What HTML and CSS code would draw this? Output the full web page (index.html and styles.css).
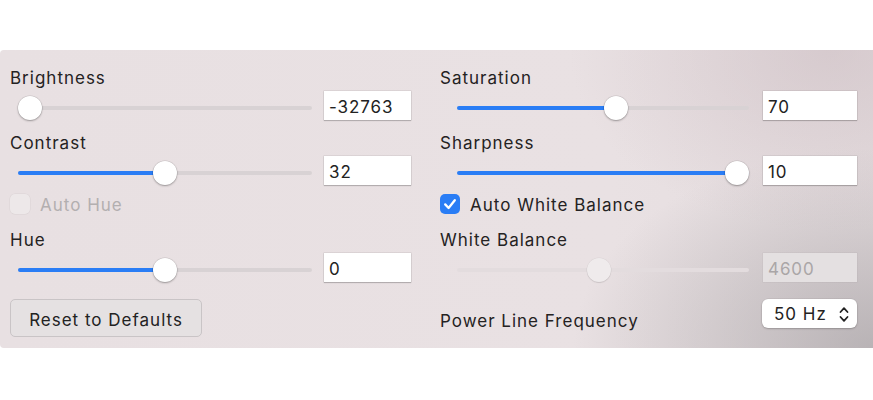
FILE: index.html
```html
<!DOCTYPE html>
<html>

<head>
  <meta name="viewport" content="width=device-width, initial-scale=1">
  <link rel="stylesheet" href="styles.css">
</head>

<body>

  <div class="panel">
    <!-- row 1 -->
    <div class="control">
      <div class="label">Brightness</div>
      <div class="row">
        <div class="slider">
          <div class="track"><div class="fill" style="width: 0%"></div></div>
          <span class="knob" style="--p: 0"></span>
        </div>
        <input class="field" type="text" value="-32763">
      </div>
    </div>
    <div class="control right">
      <div class="label">Saturation</div>
      <div class="row">
        <div class="slider">
          <div class="track"><div class="fill" style="width: 54.9%"></div></div>
          <span class="knob" style="--p: 0.549"></span>
        </div>
        <input class="field" type="text" value="70">
      </div>
    </div>

    <!-- row 2 -->
    <div class="control gap-md">
      <div class="label">Contrast</div>
      <div class="row">
        <div class="slider">
          <div class="track"><div class="fill" style="width: 50%"></div></div>
          <span class="knob" style="--p: 0.5"></span>
        </div>
        <input class="field" type="text" value="32">
      </div>
    </div>
    <div class="control right gap-md">
      <div class="label">Sharpness</div>
      <div class="row">
        <div class="slider">
          <div class="track"><div class="fill" style="width: 100%"></div></div>
          <span class="knob" style="--p: 1"></span>
        </div>
        <input class="field" type="text" value="10">
      </div>
    </div>

    <!-- row 3 -->
    <div class="checkrow disabled">
      <span class="check"></span>
      <span>Auto Hue</span>
    </div>
    <div class="checkrow">
      <span class="check checked">
        <svg width="20" height="20" viewBox="0 0 20 20"><path d="M5.2 10.4 L8.6 14 L14.8 6.2" fill="none" stroke="#fff" stroke-width="2.3" stroke-linecap="round" stroke-linejoin="round"/></svg>
      </span>
      <span>Auto White Balance</span>
    </div>

    <!-- row 4 -->
    <div class="control gap-lg">
      <div class="label">Hue</div>
      <div class="row">
        <div class="slider">
          <div class="track"><div class="fill" style="width: 50%"></div></div>
          <span class="knob" style="--p: 0.5"></span>
        </div>
        <input class="field" type="text" value="0">
      </div>
    </div>
    <div class="control right gap-lg disabled">
      <div class="label">White Balance</div>
      <div class="row">
        <div class="slider">
          <div class="track"></div>
          <span class="knob" style="--p: 0.485"></span>
        </div>
        <input class="field" type="text" value="4600" disabled>
      </div>
    </div>

    <!-- row 5 -->
    <div class="bottom">
      <button class="reset">Reset to Defaults</button>
    </div>
    <div class="bottom powerline">
      <span class="pl-label">Power Line Frequency</span>
      <div class="popup">
        <span>50 Hz</span>
        <svg class="chevrons" width="10" height="17" viewBox="0 0 10 17"><path d="M1.5 6 L5 2.2 L8.5 6 M1.5 11 L5 14.8 L8.5 11" fill="none" stroke="#222" stroke-width="1.8" stroke-linecap="round" stroke-linejoin="round"/></svg>
      </div>
    </div>
  </div>

</body>

</html>
```

FILE: styles.css
```css
body {
  margin: 0;
  background: #fff;
  font-family: Inter, "Liberation Sans", Arial, sans-serif;
  font-size: 17px;
  letter-spacing: 1px;
  color: #242222;
}

.panel {
  margin-top: 50px;
  height: 298px;
  box-sizing: border-box;
  padding: 18px 16px 0 10px;
  display: grid;
  grid-template-columns: 401px 417px;
  column-gap: 29px;
  align-content: start;
  border-radius: 4px 0 0 4px;
  background:
    radial-gradient(ellipse 300px 200px at 100% 100%, rgba(170, 165, 168, 0.75), rgba(170, 165, 168, 0)),
    radial-gradient(ellipse 260px 180px at 95% 0%, rgba(205, 190, 195, 0.6), rgba(205, 190, 195, 0)),
    linear-gradient(90deg, #e8e0e2 0%, #e9e1e3 70%, #e4dcde 100%);
}

.label {
  line-height: 20px;
}

.row {
  display: flex;
  align-items: center;
  gap: 12px;
  margin-top: 3px;
}

.slider {
  position: relative;
  width: 294px;
  height: 24px;
  margin-left: 8px;
  margin-top: 5px;
}

.right .row {
  gap: 14px;
}

.right .slider {
  width: 292px;
  margin-left: 17px;
}

.track {
  margin-top: 10px;
  height: 4px;
  border-radius: 2px;
  background: #d8d2d4;
  overflow: hidden;
}

.fill {
  height: 100%;
  background: #2a7df5;
}

.knob {
  position: absolute;
  top: 0;
  left: calc(12px + (100% - 24px) * var(--p));
  width: 24px;
  height: 24px;
  margin-left: -12px;
  border-radius: 50%;
  background: #fff;
  box-shadow: 0 0 0 0.5px rgba(0, 0, 0, 0.12), 0 1px 2px rgba(0, 0, 0, 0.3);
}

.field {
  width: 87px;
  height: 29px;
  box-sizing: border-box;
  border: none;
  padding: 2px 5px 0 5px;
  font-family: inherit;
  font-size: 17px;
  letter-spacing: 0.9px;
  color: #222;
  background: #fff;
  box-shadow: 0 0 0 0.5px rgba(0, 0, 0, 0.12), 0 1px 1px rgba(0, 0, 0, 0.18);
  outline: none;
}

.right .field {
  width: 94px;
}

.disabled .track {
  background: #e3dcde;
}

.disabled .knob {
  background: #efebec;
  box-shadow: 0 0 0 0.5px rgba(0, 0, 0, 0.06), 0 1px 1px rgba(0, 0, 0, 0.1);
}

.field:disabled {
  background: #e4e0e1;
  color: #aaa6a7;
  box-shadow: 0 0 0 0.5px rgba(0, 0, 0, 0.06);
}

.gap-md {
  margin-top: 13px;
}

.gap-lg {
  margin-top: 16px;
}

.checkrow {
  display: flex;
  align-items: center;
  gap: 10px;
  height: 20px;
  margin-top: 9px;
}

.checkrow span:last-child {
  padding-top: 2px;
}

.check {
  width: 20px;
  height: 20px;
  box-sizing: border-box;
  border-radius: 5px;
  background: #fbf9fa;
  box-shadow: 0 0 0 0.5px rgba(0, 0, 0, 0.15), 0 1px 1px rgba(0, 0, 0, 0.1);
}

.check svg {
  display: block;
}

.check.checked {
  background: #2a7df5;
  box-shadow: none;
}

.checkrow.disabled {
  color: #b3afb0;
}

.checkrow.disabled .check {
  background: #ede8e9;
  box-shadow: 0 0 0 0.5px rgba(0, 0, 0, 0.06);
}

.bottom {
  margin-top: 17px;
}

.reset {
  width: 192px;
  height: 38px;
  border: 1px solid #c9c4c6;
  border-radius: 5px;
  background: #e5e1e2;
  font-family: inherit;
  font-size: 17px;
  letter-spacing: 1px;
  color: #222;
  padding: 4px 0 0 0;
}

.powerline {
  display: flex;
  justify-content: space-between;
  align-items: flex-start;
}

.pl-label {
  margin-top: 12px;
  line-height: 20px;
}

.popup {
  width: 95px;
  height: 29px;
  box-sizing: border-box;
  padding: 1px 8px 0 12px;
  display: flex;
  align-items: center;
  justify-content: space-between;
  background: #fff;
  border-radius: 6px;
  box-shadow: 0 0 0 0.5px rgba(0, 0, 0, 0.08), 0 1px 2px rgba(0, 0, 0, 0.2);
}
```
